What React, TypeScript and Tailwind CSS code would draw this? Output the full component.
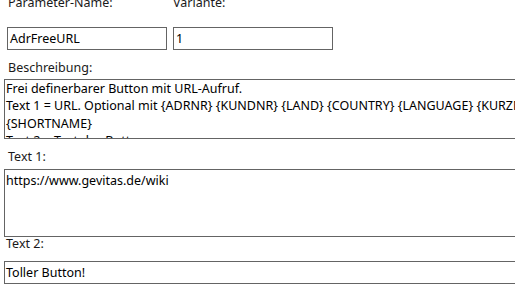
import React from 'react';

const font = { fontFamily: '"Noto Sans", "Open Sans", sans-serif' };

function Label({ children, className = '' }: { children: React.ReactNode; className?: string }) {
  return <div className={`h-[17px] leading-[17px] text-[#1a1a1a] whitespace-nowrap ${className}`}>{children}</div>;
}

export default function App() {
  return (
    <div className="w-[515px] h-[291px] overflow-hidden bg-white text-[12.5px] text-black" style={font}>
      <div className="-mt-[6px] flex flex-col">
        {/* Name / Variante */}
        <div className="flex gap-[6px] pl-[7px]">
          <div className="flex flex-col w-[160px]">
            <Label className="pl-[1px]">Parameter-Name:</Label>
            <div className="mt-[16px] h-[23px] border border-[#646464] px-[2px] leading-[21px]">AdrFreeURL</div>
          </div>
          <div className="flex flex-col w-[160px]">
            <Label>Variante:</Label>
            <div className="mt-[16px] h-[23px] border border-[#646464] px-[2px] leading-[21px]">1</div>
          </div>
        </div>

        {/* Beschreibung */}
        <Label className="mt-[9px] pl-[8px]">Beschreibung:</Label>
        <div className="mt-[3px] ml-[4px] w-[540px] h-[60px] border border-[#646464] px-[1px] leading-[17.3px] overflow-hidden">
          <div className="whitespace-nowrap">Frei definerbarer Button mit URL-Aufruf.</div>
          <div className="whitespace-nowrap">
            Text 1 = URL. Optional mit {'{ADRNR} {KUNDNR} {LAND} {COUNTRY} {LANGUAGE} {KURZNAME}'}
          </div>
          <div className="whitespace-nowrap">{'{SHORTNAME}'}</div>
          <div className="whitespace-nowrap">Text 2 = Text des Buttons</div>
        </div>

        {/* Text 1 */}
        <Label className="mt-[9px] pl-[8px]">Text 1:</Label>
        <div className="mt-[4px] ml-[4px] w-[540px] h-[68px] border border-[#646464] px-[1px] pt-[2px] leading-[17px]">
          https://www.gevitas.de/wiki
        </div>

        {/* Text 2 */}
        <Label className="-mt-[2px] pl-[6px]">Text 2:</Label>
        <div className="mt-[9px] ml-[4px] w-[540px] h-[23px] border border-[#646464] px-[1px] leading-[21px]">
          Toller Button!
        </div>
      </div>
    </div>
  );
}
